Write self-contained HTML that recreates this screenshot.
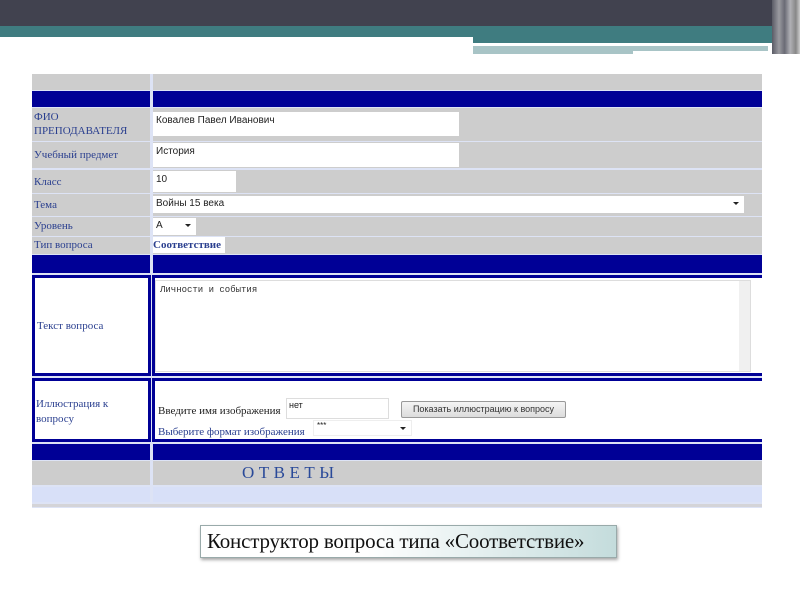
<!DOCTYPE html>
<html><head><meta charset="utf-8"><style>
*{margin:0;padding:0;box-sizing:border-box}
body{width:800px;height:600px;background:#fff;position:relative;overflow:hidden;font-family:"Liberation Serif","DejaVu Serif",serif}
div{position:absolute}
.g{background:#cdcdcd}.n{background:#000096}
.l{color:#2a3f8f;font-size:11px;left:34px}
.in{background:#fff;font-family:"Liberation Sans",sans-serif;font-size:10px;color:#222;padding:3px 3px}
.arr{position:absolute;right:5px;top:6px;width:0;height:0;border-left:3px solid transparent;border-right:3px solid transparent;border-top:3px solid #222}
</style></head><body>
<div style="left:0;top:0;width:800px;height:26px;background:#41424f"></div>
<div style="left:0;top:26px;width:800px;height:11px;background:#3f7c80"></div>
<div style="left:473px;top:37px;width:327px;height:6px;background:#3f7c80"></div>
<div style="left:473px;top:46px;width:160px;height:8px;background:#a8c4c6"></div>
<div style="left:633px;top:46px;width:135px;height:5px;background:#a8c4c6"></div>
<div style="left:772px;top:0;width:28px;height:54px;background:linear-gradient(90deg,#5a5b66,#9a9aa0 25%,#6a6b75 45%,#b0b0b5 65%,#888 85%,#ccc)"></div>

<div style="left:32px;top:74px;width:730px;height:434px;background:#dde3f5"></div>
<div class="g" style="left:32px;top:74px;width:118px;height:16px"></div><div class="g" style="left:153px;top:74px;width:609px;height:16px"></div>
<div class="n" style="left:32px;top:91px;width:118px;height:16px"></div><div class="n" style="left:153px;top:91px;width:609px;height:16px"></div>

<div class="g" style="left:32px;top:108px;width:118px;height:33px"></div><div class="g" style="left:153px;top:108px;width:609px;height:33px"></div>
<div class="l" style="top:110px;line-height:14px">ФИО<br>ПРЕПОДАВАТЕЛЯ</div>
<div class="in" style="left:153px;top:112px;width:306px;height:24px">Ковалев Павел Иванович</div>

<div class="g" style="left:32px;top:142px;width:118px;height:26px"></div><div class="g" style="left:153px;top:142px;width:609px;height:26px"></div>
<div class="l" style="top:149px">Учебный предмет</div>
<div class="in" style="left:153px;top:143px;width:306px;height:24px">История</div>

<div class="g" style="left:32px;top:170px;width:118px;height:23px"></div><div class="g" style="left:153px;top:170px;width:609px;height:23px"></div>
<div class="l" style="top:176px">Класс</div>
<div class="in" style="left:153px;top:171px;width:83px;height:21px">10</div>

<div class="g" style="left:32px;top:194px;width:118px;height:22px"></div><div class="g" style="left:153px;top:194px;width:609px;height:22px"></div>
<div class="l" style="top:199px">Тема</div>
<div class="in" style="left:153px;top:196px;width:591px;height:17px;padding-top:2px">Войны 15 века<span class="arr"></span></div>

<div class="g" style="left:32px;top:217px;width:118px;height:19px"></div><div class="g" style="left:153px;top:217px;width:609px;height:19px"></div>
<div class="l" style="top:220px">Уровень</div>
<div class="in" style="left:153px;top:218px;width:43px;height:17px;padding-top:2px">A<span class="arr"></span></div>

<div class="g" style="left:32px;top:237px;width:118px;height:17px"></div><div class="g" style="left:153px;top:237px;width:609px;height:17px"></div>
<div class="l" style="top:239px">Тип вопроса</div>
<div style="left:153px;top:237px;width:72px;height:16px;background:#fff;color:#2a3f8f;font-size:11px;font-weight:bold;line-height:16px">Соответствие</div>

<div class="n" style="left:32px;top:255px;width:118px;height:18px"></div><div class="n" style="left:153px;top:255px;width:609px;height:18px"></div>

<div style="left:32px;top:275px;width:119px;height:101px;background:#fff;border:3px solid #000096"></div>
<div style="left:152px;top:275px;width:610px;height:101px;background:#fff;border:3px solid #000096;border-right:none"></div>
<div style="left:37px;top:320px;font-size:11px;color:#2a3f8f">Текст вопроса</div>
<div style="left:155px;top:280px;width:596px;height:92px;border:1px solid #ddd;background:#fff"></div>
<div style="left:739px;top:281px;width:11px;height:90px;background:#f0f0f0"></div>
<div style="left:160px;top:285px;font-family:'Liberation Mono',monospace;font-size:9px;color:#333">Личности и события</div>

<div style="left:32px;top:378px;width:119px;height:64px;background:#fff;border:3px solid #000096"></div>
<div style="left:152px;top:378px;width:610px;height:64px;background:#fff;border:3px solid #000096;border-right:none"></div>
<div style="left:36px;top:397px;font-size:11px;line-height:15px;color:#2a3f8f">Иллюстрация к<br>вопросу</div>
<div style="left:158px;top:405px;font-size:11px;color:#222">Введите имя изображения</div>
<div style="left:158px;top:426px;font-size:11px;color:#2a3f8f">Выберите формат изображения</div>
<div class="in" style="left:286px;top:398px;width:103px;height:21px;border:1px solid #ddd;padding:1px 2px;font-size:9px">нет</div>
<div style="left:401px;top:401px;width:165px;height:17px;border:1px solid #999;border-radius:2px;background:linear-gradient(#f4f4f4,#dcdcdc);font-family:'Liberation Sans',sans-serif;font-size:9px;color:#333;text-align:center;line-height:15px">Показать иллюстрацию к вопросу</div>
<div class="in" style="left:313px;top:420px;width:99px;height:16px;border:1px solid #eee;padding:0 3px;font-size:8px">***<span class="arr"></span></div>

<div class="n" style="left:32px;top:444px;width:118px;height:16px"></div><div class="n" style="left:153px;top:444px;width:609px;height:16px"></div>
<div class="g" style="left:32px;top:461px;width:118px;height:24px"></div><div class="g" style="left:153px;top:461px;width:609px;height:24px"></div>
<div style="left:242px;top:463px;font-size:17px;letter-spacing:4.5px;color:#2a4a99">ОТВЕТЫ</div>
<div style="left:32px;top:487px;width:118px;height:15px;background:#d8e0f8"></div><div style="left:153px;top:487px;width:609px;height:15px;background:#d8e0f8"></div>
<div style="left:32px;top:504px;width:730px;height:3px;background:#d4d4d8"></div>

<div style="left:200px;top:525px;width:417px;height:33px;border:1px solid #9aa;background:linear-gradient(90deg,#fff 40%,#c4dcdc);box-shadow:1px 2px 3px rgba(0,0,0,.35);font-size:21px;line-height:31px;padding-left:6px;color:#111;white-space:nowrap;letter-spacing:-0.2px">Конструктор вопроса типа «Соответствие»</div>
</body></html>
